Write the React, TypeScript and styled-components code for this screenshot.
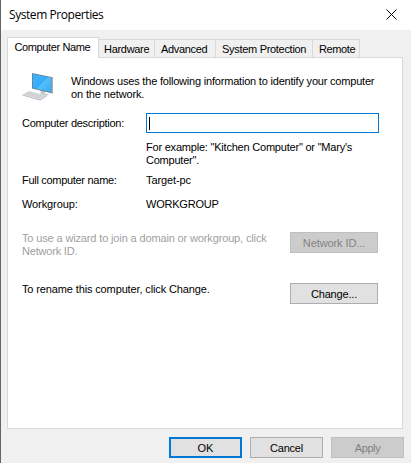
import React from 'react';
import styled, { createGlobalStyle } from 'styled-components';

const GlobalStyle = createGlobalStyle`
  body {
    margin: 0;
    background: #f0f0f0;
    color: #000;
    font: 11px/13px 'Liberation Sans', Arial, sans-serif;
  }
  * { box-sizing: border-box; }
`;

const Dialog = styled.main`
  width: 411px;
  height: 463px;
  display: flex;
  flex-direction: column;
  background: #f0f0f0;
  border-left: 1px solid #646464;
  overflow: hidden;
`;

const TitleBar = styled.header`
  height: 30px;
  flex: none;
  display: flex;
  align-items: center;
  justify-content: space-between;
  padding: 0 14px 2px 8px;
  background: #fff;
`;

const Title = styled.h1`
  margin: 0;
  padding-top: 2px;
  font: 400 12px/16px 'Open Sans', 'Segoe UI', sans-serif;
  letter-spacing: -0.43px;
`;

const CloseButton = styled.button`
  display: flex;
  padding: 0;
  border: 0;
  background: none;
`;

const Tabs = styled.nav`
  display: flex;
  align-items: flex-end;
  height: 27px;
  flex: none;
  padding-left: 6px;
`;

const Tab = styled.button<{ $active?: boolean; $width: number; $spacing: number; $indent?: number }>`
  width: ${(p) => p.$width}px;
  height: ${(p) => (p.$active ? 21 : 18)}px;
  margin-bottom: ${(p) => (p.$active ? -1 : 0)}px;
  padding: 3px 0 0 ${(p) => p.$indent ?? 6}px;
  display: flex;
  align-items: flex-start;
  border: 1px solid #d9d9d9;
  border-bottom: 0;
  border-left-width: ${(p) => (p.$active ? 1 : 0)}px;
  background: ${(p) => (p.$active ? '#fff' : '#f0f0f0')};
  color: inherit;
  font: inherit;
  letter-spacing: ${(p) => p.$spacing}px;
  white-space: nowrap;
  z-index: ${(p) => (p.$active ? 1 : 0)};
`;

const Panel = styled.section`
  width: 396px;
  height: 372px;
  flex: none;
  margin-left: 6px;
  padding: 14px 23px 0 14px;
  border: 1px solid #d9d9d9;
  background: #fff;
`;

const Intro = styled.div`
  display: flex;
  height: 41px;
  gap: 16px;
`;

const Copy = styled.div<{ $top?: number; $disabled?: boolean }>`
  padding-top: ${(p) => p.$top ?? 0}px;
  color: ${(p) => (p.$disabled ? '#a0a0a0' : 'inherit')};
`;

const Line = styled.div<{ $spacing: number }>`
  white-space: nowrap;
  letter-spacing: ${(p) => p.$spacing}px;
`;

const Field = styled.div<{ $height: number }>`
  display: grid;
  grid-template-columns: 124px 233px;
  height: ${(p) => p.$height}px;
`;

const TextBox = styled.div`
  height: 20px;
  padding: 3px 2px;
  border: 1px solid #0078d7;
  background: #fff;
`;

const Caret = styled.span`
  display: block;
  width: 1px;
  height: 13px;
  background: #000;
`;

const ActionRow = styled.div<{ $height: number }>`
  display: flex;
  justify-content: space-between;
  height: ${(p) => p.$height}px;
  padding-right: 1px;
`;

const Button = styled.button<{ $width: number; $spacing: number; $primary?: boolean }>`
  width: ${(p) => p.$width}px;
  height: 21px;
  flex: none;
  display: flex;
  align-items: center;
  justify-content: center;
  padding: 1px 0 0;
  border: ${(p) => (p.$primary ? '2px solid #0078d7' : '1px solid #adadad')};
  background: #e1e1e1;
  color: #000;
  font: inherit;
  letter-spacing: ${(p) => p.$spacing}px;
  &:disabled {
    border-color: #bfbfbf;
    background: #ccc;
    color: #838383;
  }
`;

const Footer = styled.footer`
  display: flex;
  justify-content: flex-end;
  gap: 8px;
  padding: 8px 7px 0 0;
`;

function ComputerIcon() {
  return (
    <svg width="33" height="32" viewBox="0 0 33 32">
      <defs>
        <linearGradient id="screen" x1="0" y1="0" x2="1" y2="1">
          <stop offset="0" stopColor="#3fb3fb" />
          <stop offset=".5" stopColor="#35acf8" />
          <stop offset=".51" stopColor="#58bffd" />
          <stop offset="1" stopColor="#34aaf5" />
        </linearGradient>
      </defs>
      <path d="M18 18l5 1v2.500l4 1-4 2-6-1.500 2-2z" fill="#c3c8cb" />
      <path d="M10 1l20.500 4.200v16.300L10 16.500z" fill="#64808f" />
      <path d="M10.800 1.900l18.400 3.900v14.500l-18.400-4.500z" fill="url(#screen)" />
      <path d="M29.400 5.200l1.300-.2v16.500l-1.300-.4z" fill="#9aa8b0" />
      <path d="M.5 22.500l7-3.500 17 4.500-6.500 4z" fill="#dcdfe2" />
      <path d="M.5 22.500l17.500 5v1L.5 23.500zM18 27.500l6.500-4v1L18 28.500z" fill="#b3b8bc" />
      <path d="M3 21.500l16 4.700M5.500 20.300l16 4.400M7 20l-4 2.500M10 20.500l-4 2.500M13 21.300l-4 2.700M16 22l-4 3M19 22.900l-4 3" stroke="#bfc4c8" strokeWidth=".6" fill="none" />
    </svg>
  );
}

export default function App() {
  return (
    <>
      <GlobalStyle />
      <Dialog>
        <TitleBar>
          <Title>System Properties</Title>
          <CloseButton aria-label="Close">
            <svg width="11" height="11" viewBox="0 0 11 11">
              <path d="M.5.5l10 10M10.500.5l-10 10" stroke="#000" strokeWidth="1" />
            </svg>
          </CloseButton>
        </TitleBar>
        <Tabs>
          <Tab $active $width={92} $spacing={-0.38} $indent={6.5}>Computer Name</Tab>
          <Tab $width={56} $spacing={-0.3} $indent={5}>Hardware</Tab>
          <Tab $width={61} $spacing={-0.33}>Advanced</Tab>
          <Tab $width={97} $spacing={-0.3}>System Protection</Tab>
          <Tab $width={47} $spacing={-0.4}>Remote</Tab>
        </Tabs>
        <Panel>
          <Intro>
            <ComputerIcon />
            <Copy $top={3}>
              <Line $spacing={-0.2}>Windows uses the following information to identify your computer</Line>
              <Line $spacing={-0.13}>on the network.</Line>
            </Copy>
          </Intro>
          <Field $height={28}>
            <Copy $top={4}><Line $spacing={-0.27}>Computer description:</Line></Copy>
            <TextBox role="textbox" aria-label="Computer description"><Caret /></TextBox>
          </Field>
          <Field $height={33}>
            <span />
            <Copy>
              <Line $spacing={-0.21}>For example: "Kitchen Computer" or "Mary's</Line>
              <Line $spacing={-0.22}>Computer".</Line>
            </Copy>
          </Field>
          <Field $height={24}>
            <Line $spacing={-0.3}>Full computer name:</Line>
            <Line $spacing={-0.1}>Target-pc</Line>
          </Field>
          <Field $height={34}>
            <Line $spacing={-0.1}>Workgroup:</Line>
            <Line $spacing={-0.22}>WORKGROUP</Line>
          </Field>
          <ActionRow $height={51}>
            <Copy $disabled>
              <Line $spacing={-0.14}>To use a wizard to join a domain or workgroup, click</Line>
              <Line $spacing={-0.2}>Network ID.</Line>
            </Copy>
            <Button $width={88} $spacing={-0.1} disabled>Network ID...</Button>
          </ActionRow>
          <ActionRow $height={21}>
            <Line $spacing={-0.13}>To rename this computer, click Change.</Line>
            <Button $width={88} $spacing={-0.17}>Change...</Button>
          </ActionRow>
        </Panel>
        <Footer>
          <Button $width={73} $spacing={0} $primary>OK</Button>
          <Button $width={73} $spacing={-0.2}>Cancel</Button>
          <Button $width={73} $spacing={-0.4} disabled>Apply</Button>
        </Footer>
      </Dialog>
    </>
  );
}
